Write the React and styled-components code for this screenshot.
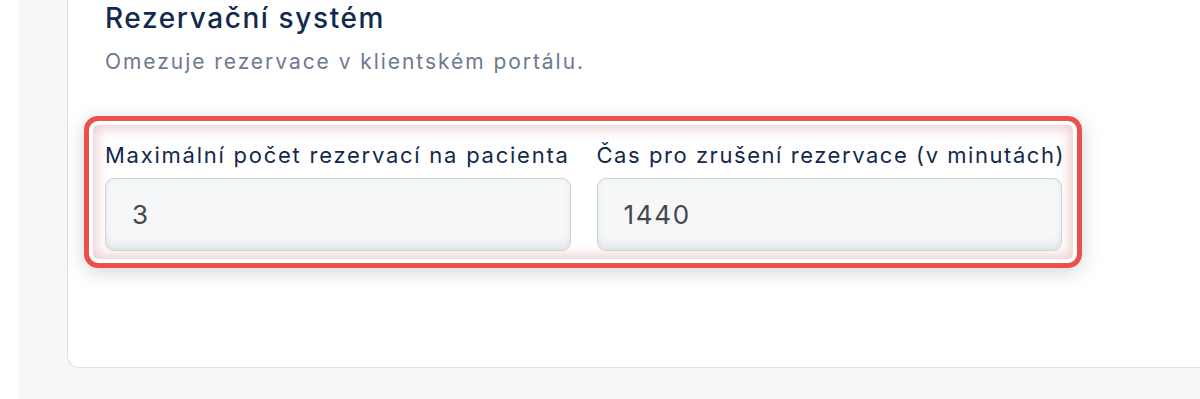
import React from "react";
import styled, { createGlobalStyle } from "styled-components";

const Global = createGlobalStyle`
  html, body { margin: 0; padding: 0; background: #ffffff; }
  body { font-family: "Inter", "Noto Sans", sans-serif; }
  * { box-sizing: border-box; }
`;

const Page = styled.div`
  display: flex;
  height: 399px;
  overflow: hidden;
`;

const Strip = styled.div`
  width: 18px;
  flex: none;
  background: #ffffff;
`;

const Main = styled.main`
  flex: 1;
  background: #f6f7f9;
  padding: 0 0 31px 49px;
  display: flex;
  flex-direction: column;
`;

const Card = styled.section`
  background: #ffffff;
  border-left: 1px solid #d8e6e5;
  border-bottom: 1px solid #d8e6e5;
  border-bottom-left-radius: 12px;
  padding: 0 0 99px 16px;
  margin-right: -20px;
`;

const Header = styled.header`
  padding-left: 21px;
  margin-bottom: 40px;
`;

const Title = styled.h2`
  margin: 0;
  font-size: 28px;
  line-height: 36px;
  font-weight: 500;
  color: #122a4d;
  letter-spacing: 1.6px;
`;

const Subtitle = styled.p`
  margin: 12px 0 0;
  font-size: 21px;
  line-height: 28px;
  color: #6e7a8f;
  letter-spacing: 1.95px;
`;

const Highlight = styled.div`
  width: 998px;
  border: 5px solid #e8524a;
  border-radius: 14px;
  padding: 19px 15px 12px 16px;
  box-shadow:
    inset 0 0 0 4px #ffffff,
    inset 0 0 12px 8px rgba(214, 135, 135, 0.4),
    0 4px 20px rgba(0, 0, 0, 0.17);
  display: grid;
  grid-template-columns: minmax(0, 1fr) minmax(0, 1fr);
  column-gap: 26px;
`;

const Field = styled.label`
  display: flex;
  flex-direction: column;
  gap: 8px;
  min-width: 0;
`;

const Label = styled.span`
  font-size: 22px;
  line-height: 30px;
  color: #13294b;
  letter-spacing: ${(p) => (p.$tight ? "1.55px" : "1.75px")};
  white-space: nowrap;
`;

const Input = styled.input`
  height: 73px;
  width: 100%;
  border: 1px solid #c8d6d5;
  border-radius: 9px;
  background: #f5f7f9;
  padding: 0 26px;
  font-family: inherit;
  font-size: 26px;
  letter-spacing: 1.7px;
  color: #45474b;
  box-shadow:
    inset 0 -10px 12px -6px rgba(0, 0, 0, 0.08),
    inset 0 0 6px rgba(0, 0, 0, 0.05);
  outline: none;
`;

export default function App() {
  return (
    <>
      <Global />
      <Page>
        <Strip />
        <Main>
          <Card>
            <Header>
              <Title>Rezervační systém</Title>
              <Subtitle>Omezuje rezervace v klientském portálu.</Subtitle>
            </Header>
            <Highlight>
              <Field>
                <Label>Maximální počet rezervací na pacienta</Label>
                <Input type="text" defaultValue="3" readOnly />
              </Field>
              <Field>
                <Label $tight>Čas pro zrušení rezervace (v minutách)</Label>
                <Input type="text" defaultValue="1440" readOnly />
              </Field>
            </Highlight>
          </Card>
        </Main>
      </Page>
    </>
  );
}
